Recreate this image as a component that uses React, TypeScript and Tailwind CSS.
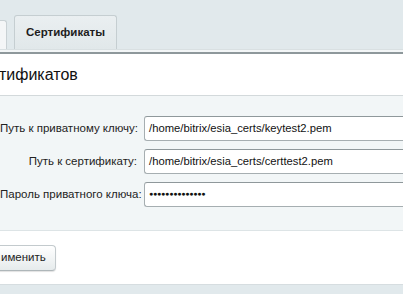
import React from 'react';

const rows = [
  { label: 'Путь к приватному ключу:', value: '/home/bitrix/esia_certs/keytest2.pem', type: 'text' },
  { label: 'Путь к сертификату:', value: '/home/bitrix/esia_certs/certtest2.pem', type: 'text' },
  { label: 'Пароль приватного ключа:', value: '12345678901234', type: 'password' },
];

const App = () => {
  return (
    <div className="w-[403px] h-[294px] overflow-hidden bg-[#e1e9ec] font-[family-name:Liberation_Sans,Arial,sans-serif] text-black">
      {/* tabs */}
      <div className="h-[49px] flex items-end gap-[7px]">
        <div className="w-[8px] h-[29px] -ml-px bg-[#f4f6f7] border border-b-0 border-[#c9d1d4] rounded-tr-[3px]" />
        <div className="w-[103px] h-[34px] flex items-center justify-center bg-gradient-to-b from-[#eaeff1] to-[#e1e8ea] border border-b-0 border-[#c5ced1] rounded-t-[3px] text-[11.5px] font-bold text-[#1d1d1d]">
          Сертификаты
        </div>
      </div>
      <div className="h-[3px] bg-[#f3f6f7] border-t border-[#d9e0e2]" />
      <div className="h-[2px] bg-[#8e989b]" />

      {/* panel */}
      <div className="bg-white">
        <div className="h-[42px] flex items-center border-b border-[#d3d9db]">
          <span className="text-[16px] leading-none -ml-[1px] text-[#111]">тификатов</span>
        </div>
        <div className="bg-[#f2f6f7] border-b border-[#dde4e6] pt-[20px] pb-[23px] flex flex-col gap-[8px]">
          {rows.map((r) => (
            <div key={r.label} className="flex items-center">
              <div className="w-[137px] text-right text-[11.5px] text-[#222] whitespace-nowrap">{r.label}</div>
              <div className="ml-[7px] flex-1 h-[25px] bg-white border border-[#a6aeb1] border-t-[#8f989b] rounded-l-[3px] border-r-0 flex items-center pl-[4px] text-[11.25px] text-[#111] whitespace-nowrap overflow-hidden">
                {r.type === 'password' ? (
                  <span className="text-[7px] tracking-[-0.2px]">{'●'.repeat(14)}</span>
                ) : (
                  r.value
                )}
              </div>
            </div>
          ))}
        </div>
        <div className="h-[53px] flex items-center">
          <button className="-ml-[20px] h-[26px] w-[76px] pl-[20px] bg-gradient-to-b from-[#ffffff] to-[#e6ebec] border border-[#c3cacd] border-b-[#aeb6b9] rounded-[4px] shadow-[0_1px_1px_rgba(0,0,0,0.12)] text-[11.5px] font-medium text-[#222] flex items-center justify-start">
            именить
          </button>
        </div>
      </div>
      <div className="h-px bg-[#d6dde0]" />
    </div>
  );
};

export default App;
